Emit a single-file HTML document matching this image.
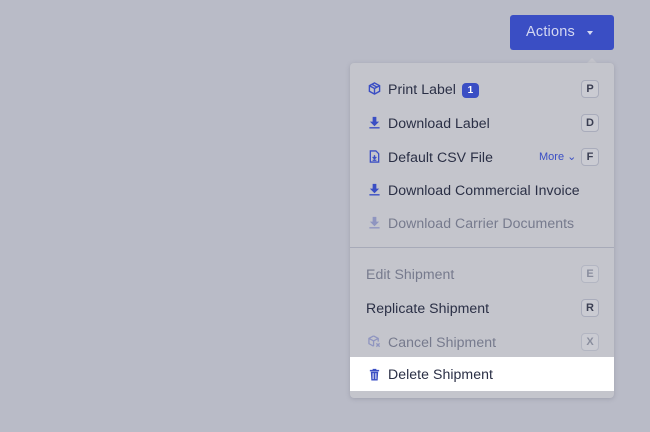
<!DOCTYPE html>
<html><head><style>
body{margin:0;width:650px;height:432px;background:#b9bbc7;font-family:"Liberation Sans",sans-serif;position:relative;overflow:hidden}
.btn{position:absolute;left:510px;top:15px;width:104px;height:35px;background:#3a4ec4;border-radius:3px;color:#d4d8f2;font-size:14.5px;letter-spacing:.2px;line-height:35px;box-sizing:border-box;padding-left:16px}
.btn:after{content:"";position:absolute;left:77px;top:16px;border:3.5px solid transparent;border-top:4px solid #d4d8f2}
.menu{position:absolute;left:350px;top:63px;width:264px;height:335px;background:#c4c5cc;border-radius:4px;box-shadow:0 1px 4px rgba(80,80,100,.25)}
.arrow{position:absolute;left:586px;top:58px;border:6px solid transparent;border-bottom:6px solid #c4c5cc;border-top:0}
.row{position:absolute;left:0;width:264px;height:33px;font-size:14.1px;letter-spacing:.05px;line-height:34px;color:#2a2f45}
.row .t{position:absolute;left:38px}
.row .ic{position:absolute;left:18px;top:10px;width:13px;height:13px}
.dim{color:#767a8d}
.k{position:absolute;left:231px;top:8px;width:16px;height:16px;border:1px solid #a9acbb;border-radius:4px;font-size:11px;font-weight:bold;line-height:16px;text-align:center;color:#3a3e52;background:#cacbd2;letter-spacing:0}
.dim .k{color:#8a8e9e;border-color:#b3b6c2}
.badge{display:inline-block;background:#3a4ec4;color:#fff;font-size:10px;font-weight:bold;line-height:15px;width:17px;text-align:center;border-radius:4px;margin-left:6px;vertical-align:1px;letter-spacing:0}
.more{position:absolute;left:189px;font-size:11px;color:#3a4ec4;letter-spacing:0}
.hl{background:#fff}
.div{position:absolute;left:0;top:184px;width:264px;height:1px;background:#a7aab8}
</style></head><body>
<div class="btn">Actions</div>
<div class="arrow"></div>
<div class="menu">
<div class="row" style="top:9px"><svg class="ic" viewBox="0 0 14 14" fill="none" stroke="#3a4ec4" stroke-width="1.5"><path d="M7 1l5.5 3v6L7 13 1.5 10V4z M1.5 4L7 7l5.5-3 M7 7v6 M4.2 2.5l5.5 3"/></svg><span class="t">Print Label<span class="badge">1</span></span><span class="k">P</span></div>
<div class="row" style="top:43px"><svg class="ic" viewBox="0 0 14 14" fill="#3a4ec4"><path d="M5 1h4v5h3L7 11 2 6h3z M1.5 12h11v1.5h-11z"/></svg><span class="t">Download Label</span><span class="k">D</span></div>
<div class="row" style="top:77px"><svg class="ic" viewBox="0 0 14 14" fill="none" stroke="#3a4ec4" stroke-width="1.4"><path d="M2.5 1h6l3 3v9h-9z M5 7.5l2 2 2-2 M7 5.5v4 M5 11h4"/></svg><span class="t">Default CSV File</span><span class="more">More ⌄</span><span class="k">F</span></div>
<div class="row" style="top:110px"><svg class="ic" viewBox="0 0 14 14" fill="#3a4ec4"><path d="M5 1h4v5h3L7 11 2 6h3z M1.5 12h11v1.5h-11z"/></svg><span class="t">Download Commercial Invoice</span></div>
<div class="row dim" style="top:143px"><svg class="ic" viewBox="0 0 14 14" fill="#8f95c0"><path d="M5 1h4v5h3L7 11 2 6h3z M1.5 12h11v1.5h-11z"/></svg><span class="t">Download Carrier Documents</span></div>
<div class="div"></div>
<div class="row dim" style="top:194px"><span class="t" style="left:16px">Edit Shipment</span><span class="k">E</span></div>
<div class="row" style="top:228px"><span class="t" style="left:16px">Replicate Shipment</span><span class="k">R</span></div>
<div class="row dim" style="top:262px"><svg class="ic" viewBox="0 0 14 14" fill="none" stroke="#8f95c0" stroke-width="1.4"><path d="M6 1l5 2.7v3.5 M6 1L1 3.7v5.6L6 12 M1 3.7L6 6.4l5-2.7 M6 6.4V12 M9 9l3.5 3.5 M12.5 9L9 12.5"/></svg><span class="t">Cancel Shipment</span><span class="k">X</span></div>
<div class="row hl" style="top:294px;height:34px;line-height:35px"><svg class="ic" viewBox="0 0 14 14" fill="#3a4ec4" style="top:11px"><path d="M2 2h10v1.6H2z M5 1h4v1H5z M3 4h8l-.6 9.5H3.6z" /><path d="M5.5 5.5v6.5 M8.5 5.5v6.5" stroke="#fff" stroke-width="1"/></svg><span class="t">Delete Shipment</span></div>
</div>
</body></html>
